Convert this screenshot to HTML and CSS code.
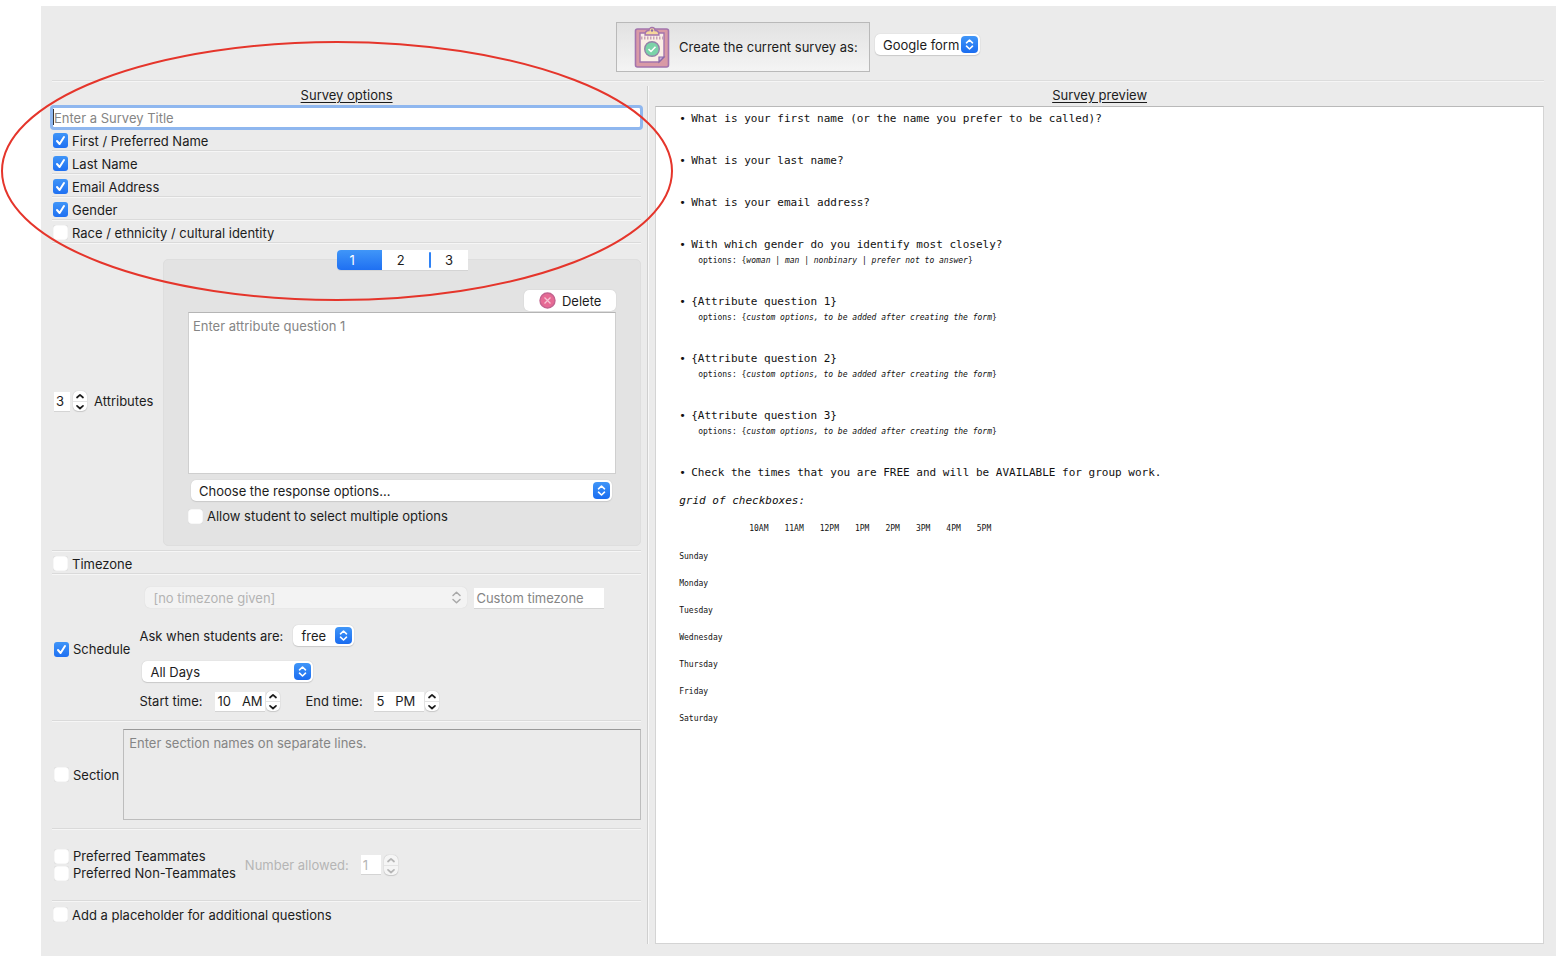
FILE: index.html
```html
<!DOCTYPE html>
<html lang="en">
<head>
<meta charset="utf-8">
<title>Survey designer</title>
<link rel="stylesheet" href="styles.css">
</head>
<body>
<svg width="0" height="0" class="defs" aria-hidden="true">
  <defs>
    <linearGradient id="blue" x1="0" y1="0" x2="0" y2="1"><stop offset="0" stop-color="#4096f8"/><stop offset="1" stop-color="#1a6cf0"/></linearGradient>
    <symbol id="arrows" viewBox="0 0 17 17"><rect width="17" height="17" rx="4" fill="url(#blue)"/><path d="M5.5 6.8 8.500 4l3 2.8M5.500 10.200l3 2.800 3-2.800" fill="none" stroke="#fff" stroke-width="1.600" stroke-linecap="round" stroke-linejoin="round"/></symbol>
    <symbol id="arrows-off" viewBox="0 0 17 17"><path d="M5 6.500 8.500 3.200 12 6.500M5 10.500l3.500 3.300 3.500-3.300" fill="none" stroke="#a9a9a9" stroke-width="1.500" stroke-linecap="round" stroke-linejoin="round"/></symbol>
    <symbol id="up" viewBox="0 0 14 10"><path d="M4 6.500 7 3.800l3 2.700" fill="none" stroke="currentColor" stroke-width="1.700" stroke-linecap="round" stroke-linejoin="round"/></symbol>
    <symbol id="down" viewBox="0 0 14 10"><path d="M4 3.800 7 6.500l3-2.700" fill="none" stroke="currentColor" stroke-width="1.700" stroke-linecap="round" stroke-linejoin="round"/></symbol>
  </defs>
</svg>

<main class="window">
  <header class="toolbar">
    <button class="create" type="button">
      <svg width="36" height="42" viewBox="0 0 36 42" aria-hidden="true">
        <rect x="1.500" y="3" width="33" height="38" rx="2" fill="#d99aa6" stroke="#a374ad" stroke-width="1.600"/>
        <path d="M6 7h24v24l-5 5H6z" fill="#fbeee6" stroke="#a374ad" stroke-width="1.400"/>
        <path d="M30 31h-5v5z" fill="#c9b0dc" stroke="#8a68a8" stroke-width="1.200"/>
        <path d="M7 12h22" stroke="#c8a3b4" stroke-width="3" stroke-dasharray="1.500 1.500"/>
        <path d="M11 9c0-3 2-4.500 4-4.500a3 3 0 0 1 6 0c2 0 4 1.500 4 4.500z" fill="#f6d79c" stroke="#a374ad" stroke-width="1.300"/>
        <circle cx="18" cy="4.500" r="1.200" fill="#8a68a8"/>
        <circle cx="18" cy="23" r="7.300" fill="#7bd3a8" stroke="#9583a8" stroke-width="1.400"/>
        <path d="m14.500 23.200 2.500 2.300 4.500-4.700" fill="none" stroke="#fff" stroke-width="1.600"/>
      </svg>
      <span>Create the current survey as:</span>
    </button>
    <div class="combo">
      <select aria-label="Survey type"><option>Google form</option></select>
      <svg class="combo-icon" width="17" height="17"><use href="#arrows"/></svg>
    </div>
  </header>

  <div class="columns">
    <form class="options">
      <h2>Survey options</h2>
      <input class="title-input" type="text" placeholder="Enter a Survey Title" aria-label="Survey title">
      <label class="row first"><input type="checkbox" checked>First / Preferred Name</label>
      <label class="row"><input type="checkbox" checked>Last Name</label>
      <label class="row"><input type="checkbox" checked>Email Address</label>
      <label class="row"><input type="checkbox" checked>Gender</label>
      <label class="row"><input type="checkbox">Race / ethnicity / cultural identity</label>

      <section class="attributes">
        <div class="attr-count">
          <input class="field one" id="attrs" type="text" value="3">
          <span class="stepper"><button type="button" aria-label="More"><svg width="14" height="10"><use href="#up"/></svg></button><button type="button" aria-label="Fewer"><svg width="14" height="10"><use href="#down"/></svg></button></span>
          <label for="attrs">Attributes</label>
        </div>
        <div class="tabs-area">
          <div class="tabs">
            <button class="tab active" type="button">1</button>
            <button class="tab second" type="button">2</button>
            <span class="tab-mark"></span>
            <button class="tab third" type="button">3</button>
          </div>
          <div class="panel">
            <button class="delete" type="button">
              <svg width="17" height="17" viewBox="0 0 17 17" aria-hidden="true"><circle cx="8.500" cy="8.500" r="7.500" fill="#e66a94" stroke="#c2638f" stroke-width="1.400"/><path d="m5.500 5.500 6 6m0-6-6 6" stroke="#f7c3d4" stroke-width="1.300"/></svg>
              Delete
            </button>
            <textarea class="question" placeholder="Enter attribute question 1" aria-label="Attribute question 1"></textarea>
            <div class="combo wide">
              <select aria-label="Response options"><option>Choose the response options...</option></select>
              <svg class="combo-icon" width="17" height="17"><use href="#arrows"/></svg>
            </div>
            <label class="check"><input type="checkbox">Allow student to select multiple options</label>
          </div>
        </div>
      </section>

      <label class="row timezone"><input type="checkbox">Timezone</label>

      <section class="schedule">
        <label class="check group"><input type="checkbox" checked>Schedule</label>
        <div class="schedule-body">
          <div class="line zone">
            <div class="combo off">
              <select disabled aria-label="Timezone"><option>[no timezone given]</option></select>
              <svg class="combo-icon" width="17" height="17"><use href="#arrows-off"/></svg>
            </div>
            <input class="field custom" type="text" placeholder="Custom timezone" aria-label="Custom timezone">
          </div>
          <div class="line ask">
            <label for="ask">Ask when students are:</label>
            <div class="combo free">
              <select id="ask"><option>free</option></select>
              <svg class="combo-icon" width="17" height="17"><use href="#arrows"/></svg>
            </div>
          </div>
          <div class="combo days">
            <select aria-label="Days"><option>All Days</option></select>
            <svg class="combo-icon" width="17" height="17"><use href="#arrows"/></svg>
          </div>
          <div class="line times">
            <label class="start" for="start">Start time:</label>
            <input class="field time" id="start" type="text" value="10&#160;&#160; AM">
            <span class="stepper"><button type="button" aria-label="Later start"><svg width="14" height="10"><use href="#up"/></svg></button><button type="button" aria-label="Earlier start"><svg width="14" height="10"><use href="#down"/></svg></button></span>
            <label class="end" for="end">End time:</label>
            <input class="field time" id="end" type="text" value="5&#160;&#160; PM">
            <span class="stepper"><button type="button" aria-label="Later end"><svg width="14" height="10"><use href="#up"/></svg></button><button type="button" aria-label="Earlier end"><svg width="14" height="10"><use href="#down"/></svg></button></span>
          </div>
        </div>
      </section>

      <section class="section">
        <label class="check group"><input type="checkbox">Section</label>
        <textarea placeholder="Enter section names on separate lines." aria-label="Section names" disabled></textarea>
      </section>

      <section class="mates">
        <div class="mates-checks">
          <label class="check group"><input type="checkbox">Preferred Teammates</label>
          <label class="check group"><input type="checkbox">Preferred Non-Teammates</label>
        </div>
        <div class="allowed">
          <label for="allowed">Number allowed:</label>
          <input class="field one" id="allowed" type="text" value="1" disabled>
          <span class="stepper"><button type="button" aria-label="Allow more" disabled><svg width="14" height="10"><use href="#up"/></svg></button><button type="button" aria-label="Allow fewer" disabled><svg width="14" height="10"><use href="#down"/></svg></button></span>
        </div>
      </section>

      <label class="row last"><input type="checkbox">Add a placeholder for additional questions</label>
    </form>

    <div class="divider"></div>

    <section class="preview">
      <h2>Survey preview</h2>
      <div class="page">
        <ul>
          <li>What is your first name (or the name you prefer to be called)?</li>
          <li>What is your last name?</li>
          <li>What is your email address?</li>
          <li>With which gender do you identify most closely?<p>options: {<em>woman | man | nonbinary | prefer not to answer</em>}</p></li>
          <li>{Attribute question 1}<p>options: {<em>custom options, to be added after creating the form</em>}</p></li>
          <li>{Attribute question 2}<p>options: {<em>custom options, to be added after creating the form</em>}</p></li>
          <li>{Attribute question 3}<p>options: {<em>custom options, to be added after creating the form</em>}</p></li>
          <li>Check the times that you are FREE and will be AVAILABLE for group work.</li>
        </ul>
        <p class="grid-title">grid of checkboxes:</p>
        <table>
          <thead>
            <tr><td></td><th>10AM</th><th>11AM</th><th>12PM</th><th>1PM</th><th>2PM</th><th>3PM</th><th>4PM</th><th>5PM</th></tr>
          </thead>
          <tbody>
            <tr><th>Sunday</th></tr>
            <tr><th>Monday</th></tr>
            <tr><th>Tuesday</th></tr>
            <tr><th>Wednesday</th></tr>
            <tr><th>Thursday</th></tr>
            <tr><th>Friday</th></tr>
            <tr><th>Saturday</th></tr>
          </tbody>
        </table>
      </div>
    </section>
  </div>
</main>
<svg class="highlight" width="674" height="262" viewBox="0 0 674 262" aria-hidden="true"><ellipse cx="337" cy="131" rx="335" ry="129" fill="none" stroke="#e5352b" stroke-width="2"/></svg>
</body>
</html>
```
FILE: styles.css
```css
* { box-sizing: border-box; }

body {
  margin: 0;
  min-height: 100vh;
  padding: 6px 2px 2px 41px;
  display: flex;
  background: #fff;
  color: #1c1c1c;
  font: 13px/16px Inter, "Liberation Sans", sans-serif;
}

button, input, select, textarea {
  margin: 0;
  padding: 0;
  border: 0;
  font: inherit;
  color: inherit;
}

svg { display: block; flex: none; }
.defs { position: absolute; }

.window {
  flex: 1;
  min-width: 0;
  display: flex;
  flex-direction: column;
  padding: 0 12px 12px 11px;
  background: #ebebeb;
}

.toolbar {
  display: flex;
  justify-content: center;
  align-items: flex-start;
  gap: 5px;
  height: 75px;
  padding-top: 16px;
  border-bottom: 1px solid #dcdcdc;
  box-shadow: 0 1px #f5f5f5;
}

.create {
  display: flex;
  align-items: center;
  gap: 9px;
  width: 254px;
  height: 50px;
  padding-left: 17px;
  border: 1px solid #b9b9b9;
  background: linear-gradient(#e2e2e2, #f4f4f4);
  white-space: nowrap;
}
.toolbar .combo { margin-top: 12px; }

.combo { display: grid; align-items: center; }
.combo select {
  grid-area: 1 / 1;
  appearance: none;
  height: 21px;
  padding: 0 20px 0 8px;
  border-radius: 5px;
  background: #fff;
  box-shadow: 0 0 1px #bbb, 0 1px 1px #ccc;
}
.combo-icon {
  grid-area: 1 / 1;
  justify-self: end;
  margin-right: 2px;
  pointer-events: none;
}
.combo.off select {
  background: #f3f3f3;
  color: #b3b3b3;
  opacity: 1;
  box-shadow: 0 0 1px #ccc;
}

.columns {
  flex: 1;
  display: grid;
  grid-template-columns: minmax(0, 59fr) 2px minmax(0, 89fr);
  column-gap: 6px;
  padding-top: 5px;
}
.divider { border-left: 1px solid #cfcfcf; border-right: 1px solid #f8f8f8; }

h2 {
  margin: 0;
  height: 20px;
  font-size: 13px;
  line-height: 18px;
  font-weight: 400;
  text-align: center;
  text-decoration: underline;
  text-underline-offset: 2px;
}

.options { display: flex; flex-direction: column; }
.title-input {
  height: 19px;
  margin: 2px 1px 4px;
  padding-left: 1px;
  background: linear-gradient(#333, #333) 0 1px / 1px 16px no-repeat #fff;
  outline: 3px solid #8fb7ef;
  border-radius: 1px;
}
::placeholder { color: #858585; opacity: 1; }

input[type="checkbox"] {
  appearance: none;
  flex: none;
  width: 15px;
  height: 15px;
  border-radius: 3px;
  background: #fff;
  box-shadow: inset 0 0 1px #aaa;
}
input[type="checkbox"]:checked {
  background: url("data:image/svg+xml,%3Csvg xmlns='http://www.w3.org/2000/svg' viewBox='0 0 15 15'%3E%3Cpath d='m4 8 2.600 3L11 4' fill='none' stroke='white' stroke-width='2' stroke-linecap='round' stroke-linejoin='round'/%3E%3C/svg%3E"), linear-gradient(#3f95f8, #1f70f2);
  box-shadow: none;
}

.row, .check { display: flex; align-items: center; gap: 4px; }
.row {
  height: 23px;
  padding: 3px 0 0 1px;
  border-bottom: 1px solid #dadada;
  box-shadow: 0 1px #f6f6f6;
}
.row.first { height: 20px; padding-top: 0; }
.group { padding-left: 2px; }

.attributes {
  display: flex;
  align-items: center;
  gap: 7px;
  padding: 7px 0 4px;
  border-bottom: 1px solid #dadada;
  box-shadow: 0 1px #f6f6f6;
}
.attr-count { display: flex; align-items: center; gap: 2px; width: 104px; padding: 6px 0 0 2px; }
.attr-count .stepper { margin-left: 1px; }
.attr-count label { margin-left: 5px; }
.field {
  height: 19px;
  padding-left: 2px;
  background: #fff;
  box-shadow: 0 1px #d4d4d4;
}
.one { width: 16px; }
.stepper {
  display: flex;
  flex-direction: column;
  width: 14px;
  border-radius: 5px;
  background: #fff;
  box-shadow: 0 0 1px #aaa, 0 1px 1px #ccc;
}
.stepper button { height: 10px; background: none; }
.stepper button + button { border-top: 1px solid #e4e4e4; }

.tabs-area { flex: 1; min-width: 0; display: flex; flex-direction: column; align-items: center; }
.tabs { display: flex; height: 20px; z-index: 1; background: #fff; border-radius: 4px 0 0 4px; box-shadow: 0 1px #d4d4d4; }
.tab { background: none; }
.tab.active {
  padding-right: 14px;
  width: 45px;
  border-radius: 4px 0 0 4px;
  background: linear-gradient(#4096f8, #1f70f2);
  color: #fff;
}
.tab.second { width: 38px; }
.tab-mark { width: 2px; margin: 2px 0 2px 9px; border-radius: 1px; background: #2f82f5; }
.tab.third { width: 37px; }
.panel {
  align-self: stretch;
  display: flex;
  flex-direction: column;
  margin-top: -11px;
  padding: 30px 24px 21px;
  border: 1px solid #dedede;
  border-radius: 5px;
  background: #e3e3e3;
}
.delete {
  align-self: flex-end;
  display: flex;
  align-items: center;
  justify-content: center;
  gap: 6px;
  width: 92px;
  height: 21px;
  margin-bottom: 1px;
  border-radius: 5px;
  background: #fff;
  box-shadow: 0 0 1px #bbb;
}
textarea { resize: none; }
.question {
  height: 162px;
  padding: 5px 4px;
  border: 1px solid #cfcfcf;
  border-top-color: #b5b5b5;
  background: #fff;
}
.wide { margin: 6px 4px 7px 3px; }

.schedule, .section, .mates {
  display: flex;
  align-items: center;
  border-bottom: 1px solid #dadada;
  box-shadow: 0 1px #f6f6f6;
}
.schedule { gap: 9px; height: 147px; padding-top: 4px; }
.schedule-body { flex: 1; display: flex; flex-direction: column; align-items: flex-start; }
.line { display: flex; align-items: center; gap: 6px; }
.zone { gap: 7px; margin-left: 6px; }
.zone .combo { width: 322px; }
.custom { width: 130px; height: 20px; }
.ask { margin-top: 17px; }
.ask label { min-width: 148px; }
.free { width: 61px; }
.days { width: 171px; margin: 15px 0 9px 3px; }
.times { gap: 1px; }
.times .start { min-width: 75px; }
.times .end { min-width: 68px; margin-left: 24px; }
.time { width: 50px; }

.section { gap: 4px; padding: 8px 0; }
.section textarea {
  flex: 1;
  height: 91px;
  padding: 5px;
  border: 1px solid #bdbdbd;
  border-top-color: #999;
  background: #ebebeb;
}

.mates { height: 72px; gap: 9px; }
.mates-checks { display: flex; flex-direction: column; }
.mates-checks .check { height: 17px; }
.allowed { display: flex; align-items: center; gap: 2px; color: #b5b5b5; }
.allowed label { min-width: 114px; }
.allowed .field { width: 20px; }
.allowed .stepper { background: #f5f5f5; margin-left: 1px; }

.last { height: 26px; padding-top: 1px; border: 0; box-shadow: none; }

.preview { display: flex; flex-direction: column; }
.page {
  flex: 1;
  padding: 5px 23px;
  border: 1px solid #d4d4d4;
  border-top-color: #b9b9b9;
  background: #fff;
  color: #111;
  font: 11px/14px "DejaVu Sans Mono", "Liberation Mono", monospace;
}
.page ul { margin: 0; padding: 0; list-style: none; }
.page li { margin-bottom: 28px; padding-left: 12px; }
.page li::before { content: "•"; float: left; margin-left: -12px; }
.page li:last-child { margin-bottom: 14px; }
.page p { margin: 0; }
.page li p { padding: 2px 0 0 7px; font-size: 8px; line-height: 13px; }
.page .grid-title { margin-bottom: 14px; font-style: italic; line-height: 14px; }

.page table { border-collapse: collapse; font-size: 8px; line-height: 13px; }
.page th, .page td { padding: 0 16px 14px 0; font-weight: 400; text-align: left; }
.page thead th { padding-bottom: 15px; }
.page tr > :first-child { width: 70px; }

.highlight { position: absolute; left: 0; top: 40px; pointer-events: none; }
```
